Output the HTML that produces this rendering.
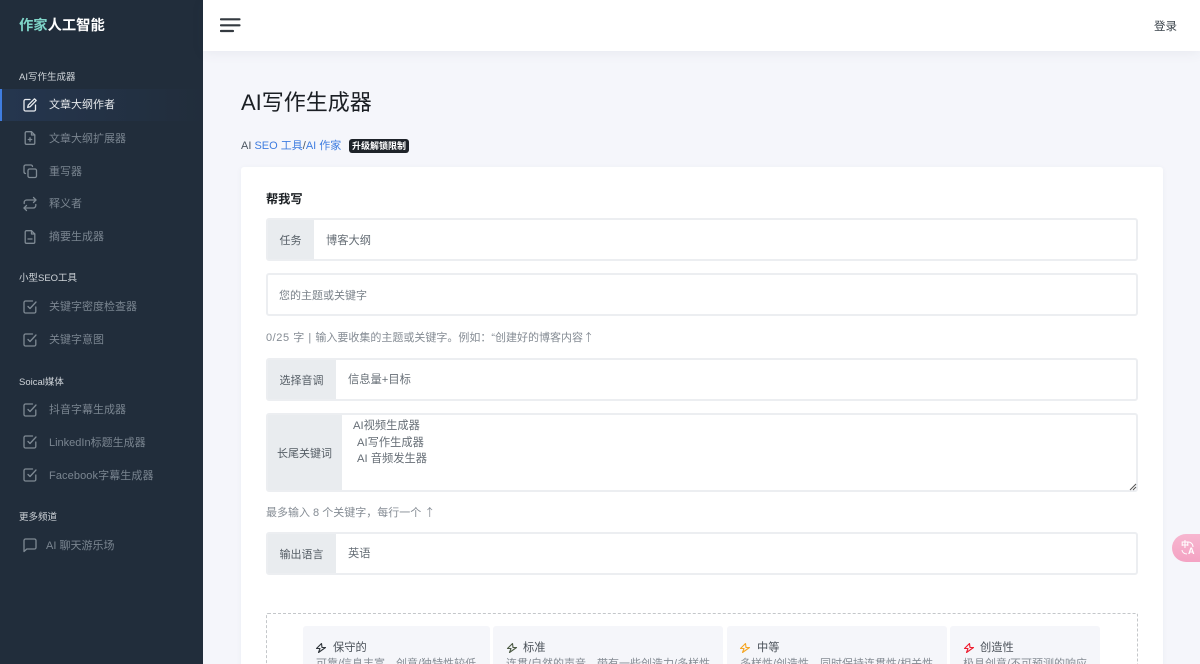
<!DOCTYPE html>
<html lang="zh">
<head>
<meta charset="utf-8">
<style>
*{box-sizing:border-box}
html,body{margin:0;padding:0;width:1200px;height:664px;overflow:hidden;background:#f5f6fb;font-family:"Liberation Sans","Noto Sans CJK SC",sans-serif}
#page{position:relative;width:1200px;height:664px;overflow:hidden;background:#f5f6fb}
.a{position:absolute;white-space:nowrap}
.arrow{font-family:"Noto Sans CJK SC",sans-serif}
#side{position:absolute;left:0;top:0;width:203px;height:664px;background:#212d3b}
.sec{position:absolute;left:19px;font-size:9.5px;line-height:14px;color:#cfd4d9;white-space:nowrap}
.it{position:absolute;left:49px;font-size:11px;line-height:16px;color:#7a8590;white-space:nowrap}
.ic{position:absolute;left:22px;width:16px;height:16px;fill:none;stroke:#7f8a94;stroke-width:1.3;stroke-linecap:round;stroke-linejoin:round}
#hdr{position:absolute;left:203px;top:0;width:997px;height:51px;background:#fff;box-shadow:0 2px 12px rgba(60,70,90,.07)}
#card{position:absolute;left:241px;top:167px;width:922px;height:520px;background:#fff;border-radius:3px;box-shadow:0 1px 6px rgba(60,70,90,.05)}
.f{position:absolute;left:266px;width:872px;background:#fff;border:2px solid #eceef1;border-radius:3px}
.l{position:absolute;left:0;top:0;bottom:0;background:#e9ecef;font-size:11px;color:#555d65;display:flex;align-items:center;justify-content:center;white-space:nowrap}
.v{position:absolute;font-size:11.25px;line-height:16px;color:#666e76;white-space:nowrap}
.h{position:absolute;left:266px;font-size:11px;line-height:16px;color:#858c94;white-space:nowrap}
.c{position:absolute;top:626px;height:60px;background:#f5f6fa;border-radius:3px}
.t{position:absolute;top:640px;font-size:11.25px;line-height:16px;color:#4a5159;white-space:nowrap}
.d{position:absolute;top:656px;font-size:11px;line-height:16px;color:#858c94;white-space:nowrap}
.b{position:absolute;top:642px;width:12px;height:12px;fill:none;stroke-width:1.1;stroke-linejoin:round;stroke-linecap:round}
</style>
</head>
<body>
<div id="page">
<div id="side">
  <div class="a" style="left:19px;top:16px;font-size:14.3px;line-height:20px;font-weight:700;color:#fff"><span style="color:#7fd4c8">作家</span>人工智能</div>

  <div class="sec" style="top:71px">AI写作生成器</div>
  <div class="a" style="left:0;top:89px;width:203px;height:32px;background:linear-gradient(90deg,#25364f,#212d3b);border-left:2px solid #3f7de0"></div>
  <svg class="ic" style="top:97px;stroke:#e8ebee" viewBox="0 0 16 16"><path d="M8 2.500H3.500a1.500 1.500 0 0 0-1.500 1.500v8.500a1.500 1.500 0 0 0 1.500 1.500H12a1.500 1.500 0 0 0 1.500-1.500V8"/><path d="M12.500 1.800l1.700 1.700L8 9.800l-2.300.6.600-2.300z"/></svg>
  <div class="it" style="top:97px;color:#e6e9ec">文章大纲作者</div>
  <svg class="ic" style="top:130px" viewBox="0 0 16 16"><path d="M9.500 1.700H4.500A1.300 1.300 0 0 0 3.200 3v10a1.300 1.300 0 0 0 1.300 1.300h7a1.300 1.300 0 0 0 1.300-1.300V5z"/><path d="M9.500 1.700V5h3.300M8 7.800v3.400M6.300 9.500h3.400"/></svg>
  <div class="it" style="top:131px">文章大纲扩展器</div>
  <svg class="ic" style="top:163px" viewBox="0 0 16 16"><rect x="6" y="6" width="8.500" height="8.500" rx="1.500"/><path d="M3.500 10.500A1.700 1.700 0 0 1 2 9V3.500A1.700 1.700 0 0 1 3.500 2H9a1.700 1.700 0 0 1 1.500 1.500"/></svg>
  <div class="it" style="top:164px">重写器</div>
  <svg class="ic" style="top:196px" viewBox="0 0 16 16"><path d="M11.500 1.500l2.500 2.500-2.500 2.500"/><path d="M2.200 7.500V6.500A2.500 2.500 0 0 1 4.700 4H14M4.500 14.500L2 12l2.500-2.500"/><path d="M13.800 8.500v1A2.500 2.500 0 0 1 11.300 12H2"/></svg>
  <div class="it" style="top:196px">释义者</div>
  <svg class="ic" style="top:229px" viewBox="0 0 16 16"><path d="M9.500 1.700H4.500A1.300 1.300 0 0 0 3.200 3v10a1.300 1.300 0 0 0 1.300 1.300h7a1.300 1.300 0 0 0 1.300-1.300V5z"/><path d="M9.500 1.700V5h3.300M6 10h4"/></svg>
  <div class="it" style="top:229px">摘要生成器</div>

  <div class="sec" style="top:272px">小型SEO工具</div>
  <svg class="ic" style="top:299px" viewBox="0 0 16 16"><path d="M6 7.500l2 2 6-6.500"/><path d="M13.800 8v4.500a1.500 1.500 0 0 1-1.500 1.500H3.500A1.500 1.500 0 0 1 2 12.500V3.500A1.500 1.500 0 0 1 3.500 2h7"/></svg>
  <div class="it" style="top:299px">关键字密度检查器</div>
  <svg class="ic" style="top:332px" viewBox="0 0 16 16"><path d="M6 7.500l2 2 6-6.500"/><path d="M13.800 8v4.500a1.500 1.500 0 0 1-1.500 1.500H3.500A1.500 1.500 0 0 1 2 12.500V3.500A1.500 1.500 0 0 1 3.500 2h7"/></svg>
  <div class="it" style="top:332px">关键字意图</div>

  <div class="sec" style="top:376px">Soical媒体</div>
  <svg class="ic" style="top:402px" viewBox="0 0 16 16"><path d="M6 7.500l2 2 6-6.500"/><path d="M13.800 8v4.500a1.500 1.500 0 0 1-1.500 1.500H3.500A1.500 1.500 0 0 1 2 12.500V3.500A1.500 1.500 0 0 1 3.500 2h7"/></svg>
  <div class="it" style="top:402px">抖音字幕生成器</div>
  <svg class="ic" style="top:434px" viewBox="0 0 16 16"><path d="M6 7.500l2 2 6-6.500"/><path d="M13.800 8v4.500a1.500 1.500 0 0 1-1.500 1.500H3.500A1.500 1.500 0 0 1 2 12.500V3.500A1.500 1.500 0 0 1 3.500 2h7"/></svg>
  <div class="it" style="top:435px">LinkedIn标题生成器</div>
  <svg class="ic" style="top:467px" viewBox="0 0 16 16"><path d="M6 7.500l2 2 6-6.500"/><path d="M13.800 8v4.500a1.500 1.500 0 0 1-1.500 1.500H3.500A1.500 1.500 0 0 1 2 12.500V3.500A1.500 1.500 0 0 1 3.500 2h7"/></svg>
  <div class="it" style="top:468px;letter-spacing:.1px">Facebook字幕生成器</div>

  <div class="sec" style="top:511px">更多频道</div>
  <svg class="ic" style="top:537px" viewBox="0 0 16 16"><path d="M14 10.500a1.500 1.500 0 0 1-1.500 1.500H4.800L2 14.500V3.500A1.500 1.500 0 0 1 3.500 2h9A1.500 1.500 0 0 1 14 3.500z"/></svg>
  <div class="it" style="top:538px;left:46px">AI 聊天游乐场</div>
</div>

<div id="hdr"></div>
<svg class="a" style="left:220px;top:16px;width:21px;height:18px" viewBox="0 0 21 18"><path d="M1 3.300H19.500M1 9.300H19.500M1 15H13" stroke="#343a40" stroke-width="2.200" stroke-linecap="round" fill="none"/></svg>
<div class="a" style="left:1154px;top:19px;font-size:11.5px;line-height:16px;color:#3c444c">登录</div>

<div class="a" style="left:241px;top:89px;font-size:22px;line-height:28px;color:#1b1f24">AI写作生成器</div>
<div class="a" style="left:241px;top:138px;font-size:11px;line-height:16px;color:#4c5661">AI <span style="color:#3f7de0">SEO 工具</span>/<span style="color:#3f7de0">AI 作家</span></div>
<div class="a" style="left:349px;top:139px;width:60px;height:14px;background:#1e2329;border-radius:3px;color:#fff;font-size:9px;font-weight:700;line-height:14px;text-align:center">升级解锁限制</div>

<div id="card"></div>
<div class="a" style="left:266px;top:191px;font-size:12.2px;line-height:16px;font-weight:700;color:#1c2024">帮我写</div>

<div class="f" style="top:218px;height:43px"><div class="l" style="width:46px;padding-right:1px">任务</div></div>
<div class="v" style="left:326px;top:233px">博客大纲</div>

<div class="f" style="top:273px;height:43px"></div>
<div class="v" style="left:279px;top:288px;font-size:11px;color:#7a828a">您的主题或关键字</div>

<div class="h" style="top:329px"><span style="letter-spacing:.55px">0/25 字 | </span>输入要收集的主题或关键字。例如：“创建好的博客内容<span class="arrow">↑</span></div>

<div class="f" style="top:358px;height:43px"><div class="l" style="width:68px;padding-right:1px">选择音调</div></div>
<div class="v" style="left:348px;top:372px">信息量+目标</div>

<div class="f" style="top:413px;height:79px"><div class="l" style="width:74px;padding-right:1px">长尾关键词</div></div>
<div class="v" style="left:353px;top:418px">AI视频生成器</div>
<div class="v" style="left:357px;top:435px">AI写作生成器</div>
<div class="v" style="left:357px;top:451px">AI 音频发生器</div>
<svg class="a" style="left:1129px;top:483px;width:8px;height:8px" viewBox="0 0 8 8"><path d="M1 7L7 1M4 7L7 4" stroke="#555" stroke-width="1" fill="none"/></svg>

<div class="h" style="top:504px">最多输入 8 个关键字，每行一个 <span class="arrow">↑</span></div>

<div class="f" style="top:532px;height:43px"><div class="l" style="width:68px;padding-right:1px">输出语言</div></div>
<div class="v" style="left:348px;top:546px">英语</div>

<div class="a" style="left:266px;top:613px;width:872px;height:80px;border:1px dashed #c4c7ca;border-radius:2px"></div>

<div class="c" style="left:303px;width:187px"></div>
<div class="c" style="left:493px;width:230px"></div>
<div class="c" style="left:727px;width:220px"></div>
<div class="c" style="left:950px;width:150px"></div>

<svg class="b" style="left:315px;stroke:#2f353b" viewBox="0 0 12 12"><path d="M6.500 1.500L1.500 6.500H5L3.500 10.500 10.500 5.500H7z"/></svg>
<div class="t" style="left:333px">保守的</div>
<div class="d" style="left:316px">可靠/信息丰富，创意/独特性较低</div>

<svg class="b" style="left:506px;stroke:#4c5a44" viewBox="0 0 12 12"><path d="M6.500 1.500L1.500 6.500H5L3.500 10.500 10.500 5.500H7z"/></svg>
<div class="t" style="left:523px">标准</div>
<div class="d" style="left:506px">连贯/自然的声音，带有一些创造力/多样性</div>

<svg class="b" style="left:739px;stroke:#f5a623" viewBox="0 0 12 12"><path d="M6.500 1.500L1.500 6.500H5L3.500 10.500 10.500 5.500H7z"/></svg>
<div class="t" style="left:757px">中等</div>
<div class="d" style="left:740px">多样性/创造性，同时保持连贯性/相关性</div>

<svg class="b" style="left:963px;stroke:#ee1c2e" viewBox="0 0 12 12"><path d="M6.500 1.500L1.500 6.500H5L3.500 10.500 10.500 5.500H7z"/></svg>
<div class="t" style="left:980px">创造性</div>
<div class="d" style="left:963px">极具创意/不可预测的响应</div>

<div class="a" style="left:1172px;top:534px;width:28px;height:28px;background:linear-gradient(180deg,#f7b6d0,#f4a3c3);border-radius:14px 0 0 14px"></div>
<div class="a" style="left:1181px;top:539px;font-size:8px;line-height:12px;font-weight:700;color:#fff">中</div>
<div class="a" style="left:1188px;top:545px;font-size:9px;line-height:12px;font-weight:700;color:#fff">A</div>
<svg class="a" style="left:1180px;top:540px;width:17px;height:15px" viewBox="0 0 17 15"><path d="M8 2c3 0 5 2 5 5M2 10c0 2 2 4 5 4" stroke="#fff" stroke-width="1" fill="none"/></svg>
</div>
</body>
</html>
